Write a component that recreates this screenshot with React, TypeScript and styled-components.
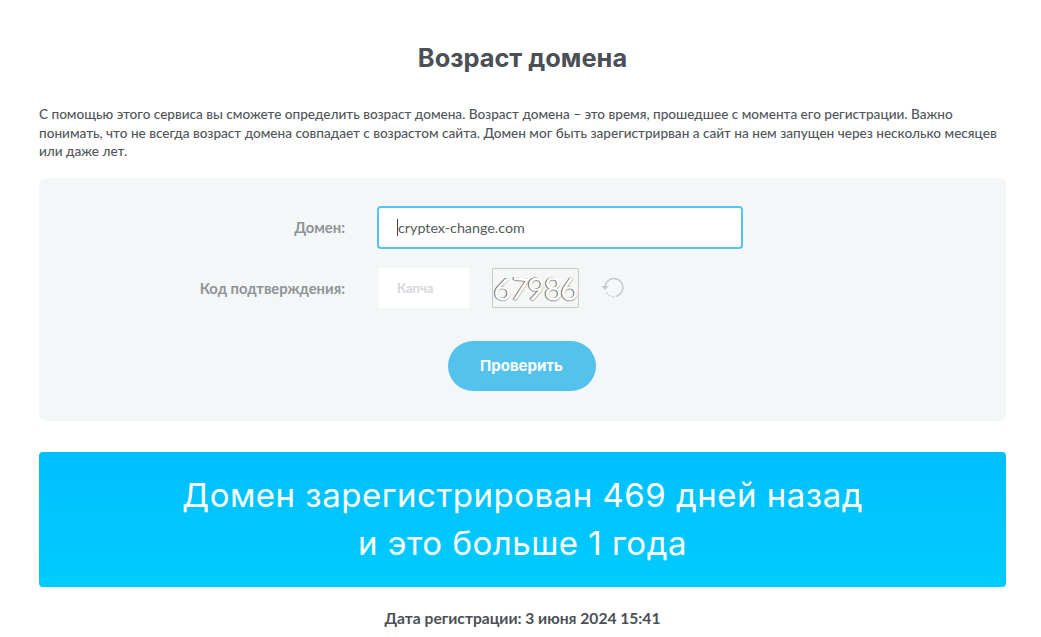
import React from 'react';
import styled, { createGlobalStyle } from 'styled-components';

const GlobalStyle = createGlobalStyle`
  html, body {
    margin: 0;
    padding: 0;
    background: #fff;
    overflow: hidden;
  }
  * {
    box-sizing: border-box;
  }
`;

const Page = styled.div`
  width: 1041px;
  height: 637px;
  overflow: hidden;
  padding: 43px 35px 0 39px;
  font-family: 'Lato', 'Open Sans', sans-serif;
  color: #4a4f55;
`;

const Title = styled.h1`
  margin: 0 0 32px;
  text-align: center;
  font-size: 25.4px;
  line-height: 30px;
  font-weight: 700;
  font-family: 'Inter', sans-serif;
  color: #4b5056;
`;

const Intro = styled.p`
  margin: 0 0 17px;
  font-size: 13.58px;
  line-height: 18.5px;
  font-weight: 500;
  color: #50555a;
`;

const FormPanel = styled.form`
  height: 243px;
  background: #f4f7f8;
  border-radius: 6px;
  padding-top: 28px;
  display: flex;
  flex-direction: column;
`;

const Row = styled.div<{ $gap: number }>`
  display: flex;
  align-items: center;
  margin-bottom: ${(p) => p.$gap}px;
`;

const Label = styled.label`
  width: 306px;
  margin-right: 33px;
  text-align: right;
  font-size: 14.8px;
  font-weight: 700;
  color: #8f9396;
`;

const DomainInput = styled.div`
  width: 366px;
  height: 43px;
  margin-left: -1px;
  display: flex;
  align-items: center;
  padding-left: 18px;
  background: #fff;
  border: 2px solid #56c3ee;
  border-radius: 4px;
  font-size: 14.3px;
  color: #555a60;
`;

const Caret = styled.span`
  width: 1px;
  height: 17px;
  background: #444;
`;

const CaptchaInput = styled.div`
  width: 90px;
  height: 40px;
  margin-left: 1px;
  display: flex;
  align-items: center;
  padding-left: 18px;
  background: #fff;
  border-radius: 2px;
  font-size: 13px;
  font-weight: 700;
  color: #d3d6da;
`;

const CaptchaImage = styled.div`
  width: 87px;
  height: 40px;
  margin-left: 23px;
  display: flex;
  align-items: center;
  justify-content: center;
  overflow: hidden;
  background: #f5f6f6;
  border: 1px solid #c8cbcc;
  border-radius: 1px;
  font-family: 'Lato', sans-serif;
  font-size: 31px;
  font-weight: 400;
  color: #fff;
  text-shadow: -1px 0 0 #666, 0 1px 1px #9a9a9a;
`;

const CaptchaDigit = styled.span<{ $tilt: number }>`
  display: inline-block;
  margin-right: -1.5px;
  transform: rotate(${(p) => p.$tilt}deg);
`;

const ReloadButton = styled.button`
  width: 24px;
  height: 24px;
  margin-left: 22px;
  padding: 0;
  border: 0;
  background: none;
  display: flex;
`;

const SubmitRow = styled.div`
  display: flex;
  justify-content: center;
  padding-right: 2px;
`;

const SubmitButton = styled.button`
  width: 148px;
  height: 50px;
  border: 0;
  border-radius: 25px;
  background: #53c3ed;
  color: #fff;
  font-family: 'Inter', sans-serif;
  font-size: 15px;
  font-weight: 700;
`;

const ResultBanner = styled.div`
  height: 135px;
  margin-top: 31px;
  display: flex;
  flex-direction: column;
  align-items: center;
  justify-content: center;
  border-radius: 4px;
  background: linear-gradient(180deg, #00bfff 0%, #00ccff 100%);
  color: #fff;
  font-family: 'Inter', sans-serif;
  font-size: 33px;
  font-weight: 400;
  letter-spacing: 0.5px;
  line-height: 48px;
`;

const RegDate = styled.div`
  margin-top: 22px;
  text-align: center;
  font-size: 15.6px;
  font-weight: 700;
  color: #4b5056;
`;

const ReloadIcon = () => (
  <svg width="24" height="24" viewBox="0 0 24 24" fill="none">
    <path d="M4 11 A9 9 0 1 1 16 20" stroke="#c4c8ca" strokeWidth="1.4" />
    <path d="M16 20 A9 9 0 0 1 4.5 15" stroke="#c4c8ca" strokeWidth="1.4" strokeDasharray="1.5 2" />
    <path d="M0.5 10 L7.5 10 L4 14 Z" fill="#c4c8ca" />
  </svg>
);

const captchaDigits: [string, number][] = [
  ['6', 8],
  ['7', 6],
  ['9', 5],
  ['8', -2],
  ['6', -3],
];

export default function App() {
  return (
    <Page>
      <GlobalStyle />
      <Title>Возраст домена</Title>
      <Intro>
        С помощью этого сервиса вы сможете определить возраст домена. Возраст домена – это время, прошедшее с момента его регистрации. Важно понимать, что не всегда возраст домена совпадает с возрастом сайта. Домен мог быть зарегистрирван а сайт на нем запущен через несколько месяцев или даже лет.
      </Intro>
      <FormPanel>
        <Row $gap={19}>
          <Label>Домен:</Label>
          <DomainInput>
            <Caret />
            cryptex-change.com
          </DomainInput>
        </Row>
        <Row $gap={33}>
          <Label>Код подтверждения:</Label>
          <CaptchaInput>Капча</CaptchaInput>
          <CaptchaImage>
            {captchaDigits.map(([digit, tilt], i) => (
              <CaptchaDigit key={i} $tilt={tilt}>
                {digit}
              </CaptchaDigit>
            ))}
          </CaptchaImage>
          <ReloadButton type="button">
            <ReloadIcon />
          </ReloadButton>
        </Row>
        <SubmitRow>
          <SubmitButton type="button">Проверить</SubmitButton>
        </SubmitRow>
      </FormPanel>
      <ResultBanner>
        <div>Домен зарегистрирован 469 дней назад</div>
        <div>и это больше 1 года</div>
      </ResultBanner>
      <RegDate>Дата регистрации: 3 июня 2024 15:41</RegDate>
    </Page>
  );
}
